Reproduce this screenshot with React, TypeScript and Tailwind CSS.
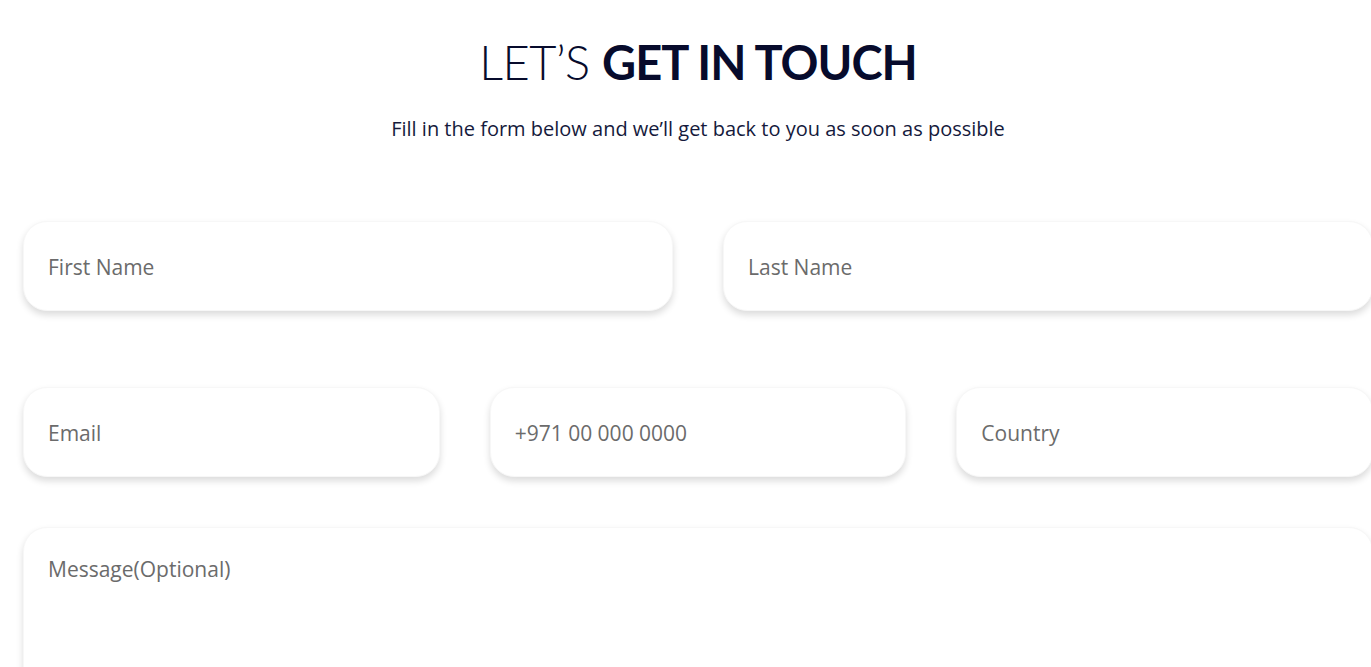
import React from "react";

const fieldBox =
  "bg-white rounded-[24px] border border-[#f7f7f7] shadow-[0_4px_7px_rgba(0,0,0,0.14)]";

function Field({ placeholder, className = "" }: { placeholder: string; className?: string }) {
  return (
    <div className={`${fieldBox} h-[90px] flex items-center px-[24px] pt-[3px] ${className}`}>
      <input
        type="text"
        placeholder={placeholder}
        className="w-full bg-transparent outline-none font-['Open_Sans',sans-serif] text-[21px] text-[#333] placeholder:text-[#6b6b6b]"
      />
    </div>
  );
}

export default function App() {
  return (
    <div className="w-full min-h-screen overflow-hidden bg-white font-['Lato',sans-serif]">
      <section className="w-[1350px] ml-[23px] pt-[34px]">
        <h1 className="text-center text-[47px] leading-[56px] text-[#070b2c]">
          <span className="font-light tracking-[-0.5px]">LET’S </span>
          <span className="font-bold tracking-[-1px]">GET IN TOUCH</span>
        </h1>
        <p className="mt-[26px] text-center font-['Open_Sans',sans-serif] text-[20px] leading-[26px] text-[#151a3c]">
          Fill in the form below and we’ll get back to you as soon as possible
        </p>

        <form className="mt-[79px]">
          <div className="grid grid-cols-2 gap-[50px]">
            <Field placeholder="First Name" />
            <Field placeholder="Last Name" />
          </div>

          <div className="mt-[76px] grid grid-cols-3 gap-[50px]">
            <Field placeholder="Email" />
            <Field placeholder="+971 00 000 0000" />
            <Field placeholder="Country" />
          </div>

          <div className={`${fieldBox} mt-[50px] h-[200px] px-[24px] pt-[26px]`}>
            <textarea
              placeholder="Message(Optional)"
              className="w-full h-full resize-none bg-transparent outline-none font-['Open_Sans',sans-serif] text-[21px] text-[#333] placeholder:text-[#6b6b6b]"
            />
          </div>
        </form>
      </section>
    </div>
  );
}
